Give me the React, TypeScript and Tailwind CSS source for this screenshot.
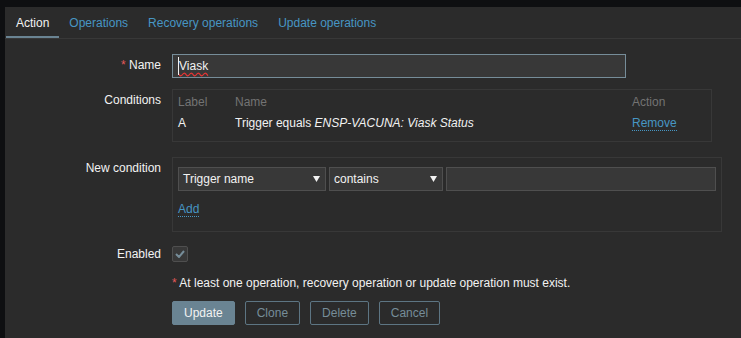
const tabs = ['Action', 'Operations', 'Recovery operations', 'Update operations'];

function Caret() {
  return (
    <svg width="7" height="6" viewBox="0 0 7 6" className="shrink-0">
      <polygon points="0,0 7,0 3.5,6" fill="#f2f2f2" />
    </svg>
  );
}

function Select({ value, width }: { value: string; width: string }) {
  return (
    <div
      className={`${width} h-[24px] flex items-center justify-between bg-[#383838] border border-[#4f4f4f] pl-[4px] pr-[5px] text-[#f2f2f2]`}
    >
      <span>{value}</span>
      <Caret />
    </div>
  );
}

function Label({ children }: { children: React.ReactNode }) {
  return <div className="text-right leading-[23px] text-[#f2f2f2]">{children}</div>;
}

export default function App() {
  return (
    <div
      className="min-h-screen bg-[#0e0f11] pt-[7px] pl-[5px] text-[12px]"
      style={{ fontFamily: '"Liberation Sans", Arial, sans-serif' }}
    >
      <div className="min-h-[331px] bg-[#2b2b2b]">
        {/* tabs */}
        <div className="flex pl-px border-b border-[#383838]">
          {tabs.map((t, i) => (
            <div
              key={t}
              className={
                i === 0
                  ? 'h-[31px] px-[10px] flex items-center text-[#f2f2f2] shadow-[inset_0_-2px_0_#6a8493]'
                  : 'h-[31px] px-[10px] flex items-center text-[#4796c4]'
              }
            >
              {t}
            </div>
          ))}
        </div>

        <div className="grid grid-cols-[156px_1fr] gap-x-[11px] pt-[15px]">
          {/* Name */}
          <Label>
            <span className="text-[#e45959]">*</span> Name
          </Label>
          <div className="w-[454px] h-[24px] flex items-center bg-[#383838] border border-[#768d99] pl-[5px] text-[#f2f2f2]">
            <span className="border-l border-[#f2f2f2] underline decoration-wavy decoration-[#e33] underline-offset-2">
              Viask
            </span>
          </div>

          {/* Conditions */}
          <div className="mt-[11px]">
            <Label>Conditions</Label>
          </div>
          <div className="mt-[11px] w-[540px] border border-[#383838] pt-[2px] pb-[7px] px-[5px]">
            <div className="grid grid-cols-[57px_397px_1fr] h-[20px] items-center text-[#737373]">
              <span>Label</span>
              <span>Name</span>
              <span>Action</span>
            </div>
            <div className="grid grid-cols-[57px_397px_1fr] h-[22px] items-center text-[#f2f2f2]">
              <span>A</span>
              <span>
                Trigger equals <i>ENSP-VACUNA: Viask Status</i>
              </span>
              <span>
                <span className="inline-block leading-[14px] text-[#4796c4] border-b border-dotted border-[#4796c4]">
                  Remove
                </span>
              </span>
            </div>
          </div>

          {/* New condition */}
          <div className="mt-[15px]">
            <Label>New condition</Label>
          </div>
          <div className="mt-[15px] w-[550px] border border-[#383838] pt-[9px] pb-[13px] px-[5px]">
            <div className="flex gap-[3px]">
              <Select value="Trigger name" width="w-[148px]" />
              <Select value="contains" width="w-[114px]" />
              <div className="flex-1 h-[24px] bg-[#383838] border border-[#4f4f4f]" />
            </div>
            <div className="mt-[9px]">
              <span className="inline-block leading-[14px] text-[#4796c4] border-b border-dotted border-[#4796c4]">
                Add
              </span>
            </div>
          </div>

          {/* Enabled */}
          <div className="mt-[13px]">
            <div className="text-right leading-[16px] text-[#f2f2f2] mt-px">Enabled</div>
          </div>
          <div className="mt-[13px] pt-px">
            <div className="w-[16px] h-[16px] bg-[#383838] border border-[#4f4f4f] rounded-[2px] flex items-center justify-center">
              <svg width="10" height="8" viewBox="0 0 10 8">
                <polyline points="1,4 4,7 9,1" fill="none" stroke="#768d99" strokeWidth="2" />
              </svg>
            </div>
          </div>

          {/* required note */}
          <div />
          <div className="mt-[14px] leading-[14px] text-[#f2f2f2]">
            <span className="text-[#e45959]">*</span> At least one operation, recovery operation or update
            operation must exist.
          </div>

          {/* buttons */}
          <div />
          <div className="mt-[11px] flex gap-[10px]">
            <button className="h-[24px] px-[11px] rounded-[2px] bg-[#6a8493] border border-[#6a8493] text-[#f2f2f2]">
              Update
            </button>
            <button className="h-[24px] px-[11px] rounded-[2px] border border-[#5d7583] text-[#768d99]">
              Clone
            </button>
            <button className="h-[24px] px-[11px] rounded-[2px] border border-[#5d7583] text-[#768d99]">
              Delete
            </button>
            <button className="h-[24px] px-[11px] rounded-[2px] border border-[#5d7583] text-[#768d99]">
              Cancel
            </button>
          </div>
        </div>
      </div>
    </div>
  );
}
